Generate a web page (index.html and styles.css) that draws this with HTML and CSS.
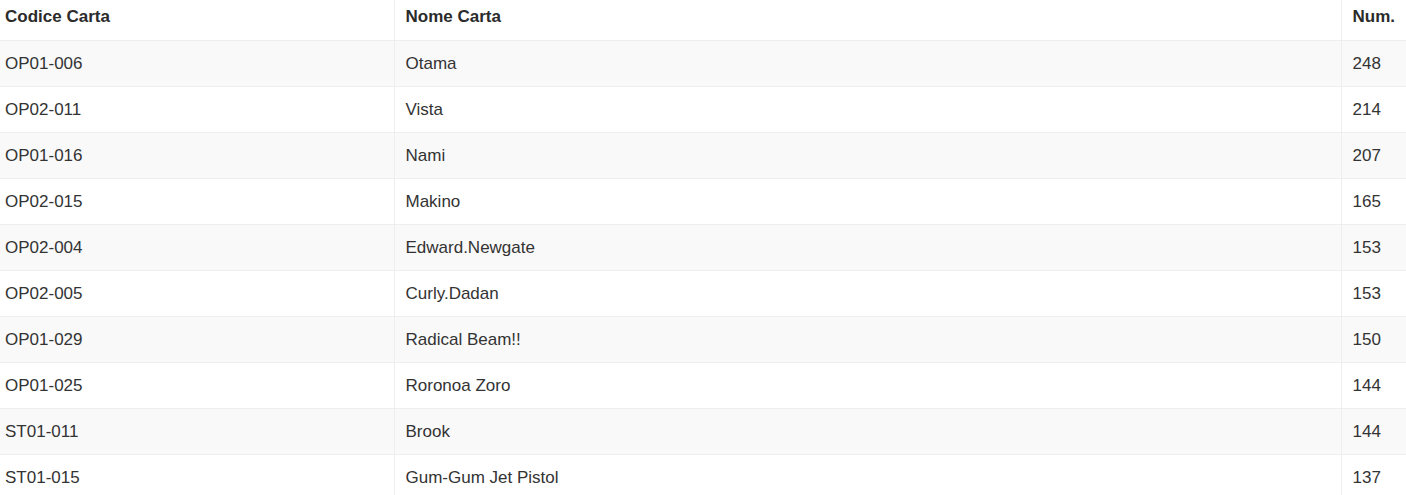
FILE: index.html
```html
<!DOCTYPE html>
<html lang="it">
<head>
<meta charset="utf-8">
<title>Carte</title>
<link rel="stylesheet" href="styles.css">
</head>
<body>
<table class="cards">
  <colgroup>
    <col class="c-code">
    <col class="c-name">
    <col class="c-num">
  </colgroup>
  <thead>
    <tr><th>Codice Carta</th><th>Nome Carta</th><th>Num.</th></tr>
  </thead>
  <tbody>
    <tr><td>OP01-006</td><td>Otama</td><td>248</td></tr>
    <tr><td>OP02-011</td><td>Vista</td><td>214</td></tr>
    <tr><td>OP01-016</td><td>Nami</td><td>207</td></tr>
    <tr><td>OP02-015</td><td>Makino</td><td>165</td></tr>
    <tr><td>OP02-004</td><td>Edward.Newgate</td><td>153</td></tr>
    <tr><td>OP02-005</td><td>Curly.Dadan</td><td>153</td></tr>
    <tr><td>OP01-029</td><td>Radical Beam!!</td><td>150</td></tr>
    <tr><td>OP01-025</td><td>Roronoa Zoro</td><td>144</td></tr>
    <tr><td>ST01-011</td><td>Brook</td><td>144</td></tr>
    <tr><td>ST01-015</td><td>Gum-Gum Jet Pistol</td><td>137</td></tr>
  </tbody>
</table>
</body>
</html>
```

FILE: styles.css
```css
html, body {
  margin: 0;
  padding: 0;
  background: #ffffff;
}

body {
  font-family: "Liberation Sans", Arial, sans-serif;
  font-size: 17px;
  color: #333333;
}

.cards {
  width: 1406px;
  border-collapse: collapse;
  table-layout: fixed;
}

.c-code { width: 394px; }
.c-name { width: 947px; }
.c-num { width: 65px; }

.cards th,
.cards td {
  text-align: left;
  line-height: 24px;
  padding: 0 10px 0 11px;
  border-left: 1px solid #eeeeee;
  white-space: nowrap;
  overflow: hidden;
}

.cards th:first-child,
.cards td:first-child {
  border-left: none;
  padding-left: 5px;
}

.cards th {
  font-weight: bold;
  color: #2b2b2b;
  height: 40px;
  box-sizing: border-box;
  padding-top: 5px;
  padding-bottom: 11px;
  vertical-align: top;
  border-bottom: 1px solid #eeeeee;
}

.cards td {
  height: 46px;
  box-sizing: border-box;
  vertical-align: middle;
  border-bottom: 1px solid #eeeeee;
}

.cards tbody tr:nth-child(odd) td {
  background: #f9f9f9;
}
```
